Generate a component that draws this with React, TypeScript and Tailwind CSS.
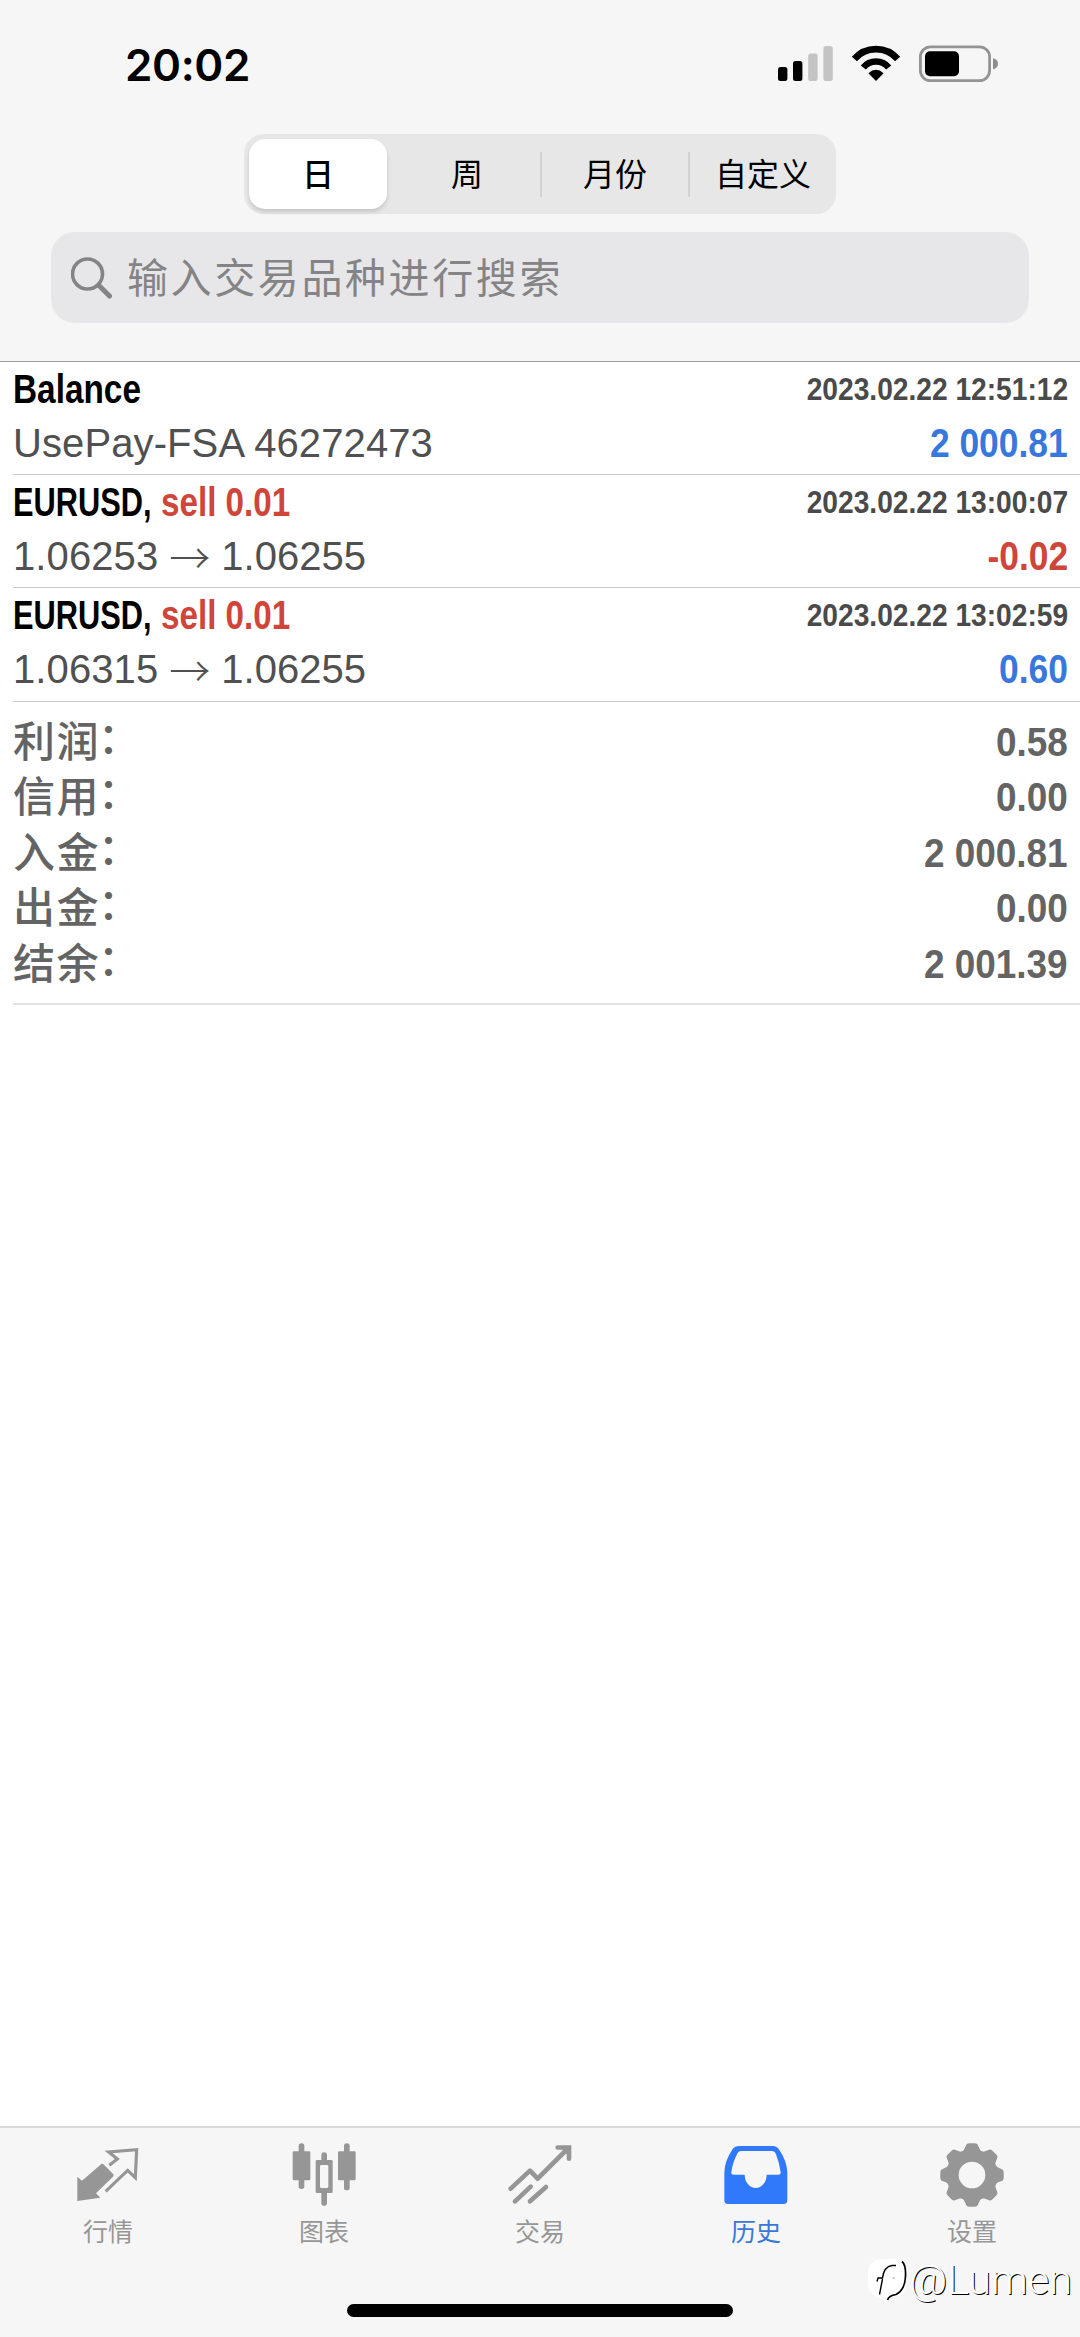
import { useState } from 'react';

interface Deal {
  title: string;
  side?: string;
  detail: string;
  to?: string;
  time: string;
  amount: string;
  color: string;
}

const periods = ['日', '周', '月份', '自定义'];

const deals: Deal[] = [
  {
    title: 'Balance',
    detail: 'UsePay-FSA 46272473',
    time: '2023.02.22 12:51:12',
    amount: '2 000.81',
    color: 'text-[#3878dc]',
  },
  {
    title: 'EURUSD,',
    side: 'sell 0.01',
    detail: '1.06253',
    to: '1.06255',
    time: '2023.02.22 13:00:07',
    amount: '-0.02',
    color: 'text-[#cf4539]',
  },
  {
    title: 'EURUSD,',
    side: 'sell 0.01',
    detail: '1.06315',
    to: '1.06255',
    time: '2023.02.22 13:02:59',
    amount: '0.60',
    color: 'text-[#3878dc]',
  },
];

const summary = [
  { label: '利润', value: '0.58' },
  { label: '信用', value: '0.00' },
  { label: '入金', value: '2 000.81' },
  { label: '出金', value: '0.00' },
  { label: '结余', value: '2 001.39' },
];

function StatusIcons() {
  return (
    <svg width="221" height="38" viewBox="0 0 221 38" fill="none">
      <rect x="0" y="22" width="9.4" height="14" rx="2.5" fill="#000" />
      <rect x="15" y="16" width="9.4" height="20" rx="2.5" fill="#000" />
      <rect x="30.2" y="8.5" width="9.4" height="27.5" rx="2.5" fill="#c4c4c4" />
      <rect x="45.4" y="1" width="9.4" height="35" rx="2.5" fill="#c4c4c4" />
      <path d="M76.4 14A28.6 28.6 0 0 1 119.6 14" stroke="#000" strokeWidth="6.8" />
      <path d="M85.3 22.5A16.4 16.4 0 0 1 110.7 22.5" stroke="#000" strokeWidth="6.6" />
      <path d="M90.4 28.2Q98 21.4 105.6 28.2L98 36Z" fill="#000" />
      <rect x="142.4" y="1.8" width="69.2" height="33.8" rx="10" stroke="#949494" strokeWidth="2.8" />
      <rect x="147" y="6.2" width="34" height="25" rx="5" fill="#000" />
      <path d="M215 13.2Q220 14.5 220 18.7Q220 23 215 24.2Z" fill="#8e8e8e" />
    </svg>
  );
}

function QuotesIcon() {
  return (
    <svg width="64" height="64" viewBox="0 0 192 192" fill="none">
      <path d="M4 101L18 113L76 63Q80 61 84 65L112 94Q114 98 111 101L60 151L73 164L4 174Z" fill="currentColor" />
      <path d="M100 67L124 48L98 27L182 20L178 104L155 82L89 145" stroke="currentColor" strokeWidth="9.5" />
    </svg>
  );
}

function ChartIcon() {
  return (
    <svg width="64" height="64" viewBox="0 0 192 192" fill="currentColor">
      <rect x="2" y="25" width="53" height="87" rx="4" />
      <rect x="20" y="1" width="17" height="137" rx="8" />
      <path fillRule="evenodd" d="M75 51H118Q122 51 122 55V146Q122 150 118 150H75Q71 150 71 146V55Q71 51 75 51ZM88 66Q84 66 84 70V131Q84 135 88 135H105Q109 135 109 131V70Q109 66 105 66Z" />
      <path d="M88 54V36A8.5 8.5 0 0 1 105 36V54ZM88 147V180A8.5 8.5 0 0 0 105 180V147Z" />
      <rect x="138" y="25" width="53" height="87" rx="4" />
      <rect x="156" y="1" width="17" height="141" rx="8" />
    </svg>
  );
}

function TradeIcon() {
  return (
    <svg width="64" height="64" viewBox="0 0 192 192" fill="none" stroke="currentColor" strokeLinecap="round">
      <path d="M8 137L66 83L89 107L178 18" strokeWidth="14" strokeLinejoin="round" />
      <path d="M149 13.5H183V47" strokeWidth="14" />
      <path d="M160 14H184V42Z" fill="currentColor" stroke="none" />
      <path d="M21 175L68 131M66 175L114 132" strokeWidth="14" />
    </svg>
  );
}

function HistoryIcon() {
  return (
    <svg width="64" height="64" viewBox="0 0 192 192" fill="currentColor">
      <path
        fillRule="evenodd"
        d="M46 9H146Q158 9 164 18Q190 55 190 90V172Q190 183 179 183H12Q1 183 1 172V90Q1 55 26 18Q33 9 46 9ZM52 24Q43 24 39 34Q25 62 22 88Q21 95 29 95H62A33 40 0 0 0 128 95H163Q171 95 170 88Q167 62 156 34Q152 24 143 24Z"
      />
    </svg>
  );
}

function SettingsIcon() {
  return (
    <svg width="64" height="64" viewBox="0 0 192 192" fill="none">
      <circle cx="96" cy="96" r="58.5" stroke="currentColor" strokeWidth="37" />
      {[0, 45, 90, 135, 180, 225, 270, 315].map((deg) => (
        <path
          key={deg}
          d="M64 30Q74 20 77 10Q79 1 88 1H104Q113 1 115 10Q118 20 128 30Z"
          fill="currentColor"
          transform={`rotate(${deg} 96 96)`}
        />
      ))}
    </svg>
  );
}

const tabs = [
  { label: '行情', icon: QuotesIcon },
  { label: '图表', icon: ChartIcon },
  { label: '交易', icon: TradeIcon },
  { label: '历史', icon: HistoryIcon },
  { label: '设置', icon: SettingsIcon },
];

function DealRow({ deal }: { deal: Deal }) {
  return (
    <div className="ml-[13px] h-[113.2px] border-b border-[#c8c8c8] pr-3 pt-px">
      <div className="flex h-[53px] items-center justify-between font-bold">
        <div className="flex text-[40px] leading-[53px]">
          {deal.side ? (
            <>
              <span className="w-[148px] origin-left scale-x-[0.77]">{deal.title}</span>
              <span className="origin-left scale-x-[0.83] whitespace-nowrap text-[#cf4539]">{deal.side}</span>
            </>
          ) : (
            <span className="origin-left scale-x-[0.834]">{deal.title}</span>
          )}
        </div>
        <span className="origin-right scale-x-[0.88] text-[32px] leading-[51px] text-[#4a4a4a]">{deal.time}</span>
      </div>
      <div className="flex h-[53px] items-center justify-between leading-[54px]">
        <div className="flex text-[40px] text-[#505050]">
          <span className="tracking-[0.1px]">{deal.detail}</span>
          {deal.to && (
            <>
              <span className="w-[63px] text-center font-['Noto_Sans_CJK_SC',sans-serif] text-[41px] font-light">→</span>
              <span>{deal.to}</span>
            </>
          )}
        </div>
        <span className={`origin-right scale-x-[0.885] text-[40px] font-bold ${deal.color}`}>{deal.amount}</span>
      </div>
    </div>
  );
}

export default function App() {
  const [period, setPeriod] = useState(0);
  const [tab, setTab] = useState(3);

  return (
    <div className="relative flex h-[2337px] w-[1080px] flex-col overflow-hidden bg-white font-['Liberation_Sans','Noto_Sans_CJK_SC',sans-serif]">
      <header className="flex h-[362px] flex-col border-b border-[#a0a0a0] bg-[#f6f6f6]">
        <div className="flex h-[134px] items-start justify-between pl-[125px] pr-[81px]">
          <span className="mt-[35px] font-['Inter',sans-serif] text-[44px] font-semibold leading-[60px] tracking-[-0.4px] text-black">
            20:02
          </span>
          <div className="mt-[45px]">
            <StatusIcons />
          </div>
        </div>
        <div className="mx-auto grid h-20 w-[592px] grid-cols-4 rounded-[20px] bg-[#e7e7e8] py-[5px]">
          {periods.map((p, i) => (
            <button
              key={p}
              onClick={() => setPeriod(i)}
              className={
                i === period
                  ? 'mx-[5px] rounded-[16px] bg-white pt-[2px] text-[32px] font-medium text-black shadow-[0_3px_4px_rgba(0,0,0,0.14)]'
                  : 'relative pl-[2px] pt-[2px] text-[32px] text-black'
              }
            >
              {p}
              {i > period + 1 && <span className="absolute left-0 top-[13px] h-[45px] w-[2px] bg-[#d2d2d4]" />}
            </button>
          ))}
        </div>
        <div className="mx-[51px] mt-[18px] flex h-[91px] items-center rounded-[24px] bg-[#e7e7e9] pl-5 text-[#848486]">
          <svg width="42" height="42" viewBox="0 0 42 42" fill="none" stroke="currentColor" strokeLinecap="round">
            <circle cx="16.5" cy="17" r="15" strokeWidth="3.6" />
            <path d="M28 28.5L38.5 39" strokeWidth="5" />
          </svg>
          <span className="ml-[14px] pt-[5px] text-[41px] tracking-[2.6px]">输入交易品种进行搜索</span>
        </div>
      </header>

      <main className="flex-1">
        {deals.map((d) => (
          <DealRow key={d.time} deal={d} />
        ))}
        <div className="ml-[13px] h-[303.5px] border-b-2 border-[#e2e2e2] pr-3 pt-[13px]">
          {summary.map((s) => (
            <div key={s.label} className="flex h-[55.5px] items-center justify-between text-[#646464]">
              <span className="text-[42px] font-medium leading-[55px] tracking-[1.5px]">
                {s.label}
                <span className="relative -left-[2px] -top-[4px]">：</span>
              </span>
              <span className="origin-right scale-x-[0.9] text-[41px] font-bold leading-[55px]">{s.value}</span>
            </div>
          ))}
        </div>
      </main>

      <footer className="flex h-[211px] flex-col border-t-2 border-[#d9d9d9] bg-[#f6f6f6]">
        <nav className="grid grid-cols-5 pt-[15px]">
          {tabs.map(({ label, icon: Icon }, i) => (
            <button
              key={label}
              onClick={() => setTab(i)}
              className={`flex flex-col items-center ${i === tab ? 'text-[#3079fb]' : 'text-[#969696]'}`}
            >
              <Icon />
              <span className={`mt-[9px] text-[25px] leading-8 ${i === tab ? 'text-[#3a78d8]' : ''}`}>{label}</span>
            </button>
          ))}
        </nav>
        <div className="mx-auto mb-5 mt-auto h-[13px] w-[386px] rounded-full bg-black" />
      </footer>

      {/* watermark */}
      <div className="absolute bottom-[33px] right-[8px] flex items-center">
        <svg width="41" height="46" viewBox="0 0 41 46" fill="none">
          <rect x="0" y="2" width="38" height="38" rx="13" fill="#fff" />
          <path d="M14 38H20L18 44Z" fill="#fff" />
          <path d="M11.500 37.500L14.500 22M9 24.500L10 21H14.500Q16 9.500 24 8.500H28" stroke="#000" strokeWidth="1.4" />
          <path d="M24.500 21H27" stroke="#888" strokeWidth="0.8" />
          <path d="M34 4.500Q38 8 37.500 19Q37 33 28 37.500Q21 38.500 19.500 43" stroke="#000" strokeWidth="1.7" />
        </svg>
        <span className="font-['Roboto',sans-serif] text-[41.5px] font-light leading-[48px] text-white [text-shadow:1px_1px_0.5px_#000]">
          @Lumen
        </span>
      </div>
    </div>
  );
}
